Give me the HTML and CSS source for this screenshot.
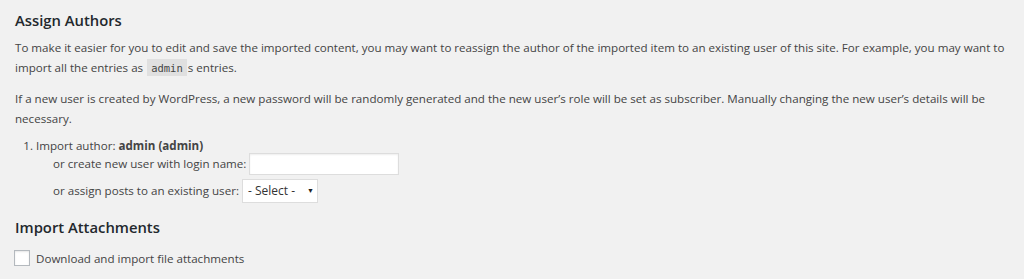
FILE: index.html
```html
<!DOCTYPE html>
<html lang="en">
<head>
  <meta charset="UTF-8" />
  <title>Import WordPress</title>
  <link rel="stylesheet" href="styles.css">
</head>
<body>
  <div class="wrap">
    <h3 class="first">Assign Authors</h3>
    <p>To make it easier for you to edit and save the imported content, you may want to reassign the author of the imported item to an existing user of this site. For example, you may want to import all the entries as <code>admin</code>s entries.</p>
    <p>If a new user is created by WordPress, a new password will be randomly generated and the new user’s role will be set as subscriber. Manually changing the new user’s details will be necessary.</p>

    <ol id="authors">
      <li>
        Import author: <strong>admin (admin)</strong>
        <div class="author-opts">
          <label for="user_new">or create new user with login name:</label>
          <input type="text" id="user_new" class="login-input">
        </div>
        <div class="author-opts assign">
          <label for="user_map">or assign posts to an existing user:</label>
          <span class="select-box" id="user_map">- Select -<span class="arrow">&#9660;</span></span>
        </div>
      </li>
    </ol>

    <h3 class="attach">Import Attachments</h3>
    <div class="check-row">
      <span class="checkbox"></span>
      <label>Download and import file attachments</label>
    </div>
  </div>
</body>
</html>
```

FILE: styles.css
```css
body {
  margin: 0;
  background-color: #f1f1f1;
  color: #444;
  font-family: "Open Sans", sans-serif;
  font-size: 11.6px;
}
.wrap {
  padding: 0 15px;
}
h3 {
  font-size: 14.8px;
  font-weight: 600;
  color: #23282d;
  margin: 0 0 8px;
  line-height: 20px;
}
h3.first {
  padding-top: 10px;
}
h3.attach {
  margin: 15px 0 0;
}
p {
  margin: 0 0 11px;
  line-height: 20px;
}
code {
  font-family: Consolas, Monaco, "DejaVu Sans Mono", monospace;
  font-size: 10.5px;
  line-height: 1;
  background: rgba(0,0,0,0.07);
  padding: 3px 4px 2px;
  margin: 0 1px;
}
ol {
  margin: 2px 0 0;
  padding-left: 21px;
}
li {
  line-height: 12px;
}
.author-opts {
  margin-left: 17px;
  display: flex;
  align-items: center;
  height: 22px;
}
.author-opts:first-of-type {
  margin-top: 1px;
}
.author-opts.assign {
  margin-top: 4px;
  height: 23px;
}
.login-input {
  box-sizing: border-box;
  width: 150px;
  height: 22px;
  border: 1px solid #ddd;
  box-shadow: inset 0 1px 2px rgba(0,0,0,0.07);
  background: #fff;
  margin: 0 0 0 3px;
  padding: 0;
}
.select-box {
  box-sizing: border-box;
  display: inline-flex;
  align-items: center;
  width: 76px;
  height: 24px;
  border: 1px solid #ddd;
  background: #fff;
  padding: 0 0 0 5px;
  margin-left: 3px;
  font-size: 12px;
  color: #333;
}
.arrow {
  font-size: 7px;
  margin-left: 12px;
  color: #222;
}
.check-row {
  display: flex;
  align-items: center;
  margin-top: 13px;
  height: 16px;
}
.checkbox {
  box-sizing: border-box;
  width: 16px;
  height: 16px;
  border: 1px solid #b4b9be;
  background: #fff;
  box-shadow: inset 0 1px 2px rgba(0,0,0,0.1);
  margin-right: 6px;
  margin-left: -1px;
}
```
